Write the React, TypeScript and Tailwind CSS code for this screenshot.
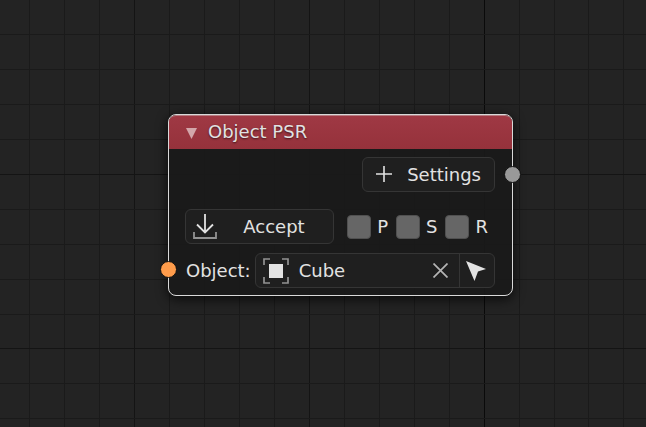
import { useState } from "react";

const columns = Array.from({ length: 80 }, (_, i) => Math.floor(29.92 + i * 34.94));
const rows = Array.from({ length: 60 }, (_, i) => Math.floor(34.5 + i * 34.94));

function Grid() {
  return (
    <svg className="pointer-events-none absolute inset-0 h-full w-full" aria-hidden="true" shapeRendering="crispEdges">
      {columns.map((x, i) => (
        <rect key={x} x={x} y="0" width="1" height="100%" fill={i === 13 ? "#0a0a0a" : i % 5 === 3 ? "#141414" : "#1a1a1a"} />
      ))}
      {rows.map((y, i) => (
        <rect key={y} x="0" y={y} width="100%" height="1" fill={i % 5 === 4 ? "#141414" : "#1a1a1a"} />
      ))}
    </svg>
  );
}

function Toggle({ label }: { label: string }) {
  return (
    <label className="flex items-center gap-1.5">
      <input type="checkbox" className="size-6 appearance-none rounded border border-[#505050] bg-[#666666] checked:bg-[#5680c2]" />
      {label}
    </label>
  );
}

const control = "flex h-[35px] items-center rounded-md border border-[#353535] bg-[#1f1f1f]";

export default function App() {
  const [name, setName] = useState("Cube");
  return (
    <main className="relative min-h-screen overflow-hidden bg-[#232323] font-['DejaVu_Sans',sans-serif] text-lg/6 text-[#e2e2e2]">
      <Grid />
      <section className="absolute top-[114px] left-[168px] w-[345px] rounded-lg border border-[#d9d9d9] bg-[#1a1a1a]/90 shadow-[0_3px_12px_rgba(0,0,0,0.75)]">
        <header className="flex h-[34px] items-center gap-[11px] rounded-t-[7px] border-t border-[#b77c82] bg-linear-to-b from-[#a63a46]/95 to-[#9c333d]/95 pb-0.5 pl-[17px] text-shadow-[0_1px_2px_rgba(0,0,0,0.6)]">
          <button type="button" aria-label="Collapse node" className="pt-0.5">
            <svg width="11" height="12" viewBox="0 0 11 12" className="block" fill="#d3a6aa">
              <path d="M0 1H11L5.500 12Z" />
            </svg>
          </button>
          <h1>Object PSR</h1>
        </header>
        <div className="flex flex-col pt-2 pr-[17px] pb-[7px] pl-4">
          <button type="button" className={`${control} gap-3.5 self-end pr-[13px] pl-3`}>
            <svg width="18" height="18" viewBox="0 0 18 18" className="mb-0.5" stroke="#e2e2e2" strokeWidth="1.6">
              <path d="M9 1V17M1 9H17" />
            </svg>
            Settings
          </button>
          <div className="mt-[17px] flex items-center justify-between">
            <button type="button" className={`${control} w-[149px] pl-[7px]`}>
              <svg width="24" height="26" viewBox="0 0 24 26" fill="none" strokeWidth="1.8">
                <path d="M12 0V18.500M4 10.500L12 18.500L20 10.500" stroke="#e2e2e2" />
                <path d="M1 18V24H23V18" stroke="#929292" />
              </svg>
              <span className="flex-1 pr-0.5 text-center">Accept</span>
            </button>
            <div className="flex gap-2 pr-[7px]">
              <Toggle label="P" />
              <Toggle label="S" />
              <Toggle label="R" />
            </div>
          </div>
          <div className="mt-[9px] flex items-center gap-1 pl-px">
            <label htmlFor="object">Object:</label>
            <div className={`${control} min-w-0 flex-1`}>
              <svg width="26" height="26" viewBox="0 0 26 26" className="ml-[7px] shrink-0" fill="none">
                <path d="M1 7V1H7M19 1H25V7M25 19V25H19M7 25H1V19" stroke="#929292" strokeWidth="1.7" />
                <path d="M6 6H20V20H6Z" fill="#e2e2e2" />
              </svg>
              <input id="object" value={name} onChange={(e) => setName(e.target.value)} className="ml-2.5 min-w-0 flex-1 bg-transparent outline-none" />
              <button type="button" aria-label="Clear object" className="pr-[11px] pl-3" onClick={() => setName("")}>
                <svg width="15" height="15" viewBox="0 0 15 15" className="block" stroke="#b4b4b4" strokeWidth="1.7">
                  <path d="M.5 .5L14.500 14.500M14.500 .5L.5 14.500" />
                </svg>
              </button>
              <button type="button" aria-label="Pick object" className="flex h-full w-[35px] items-center border-l border-[#353535] pl-1.5">
                <svg width="20" height="20" viewBox="0 0 20 20" fill="#e2e2e2">
                  <path d="M0 0L20 8L12 10.500L8.500 20Z" />
                </svg>
              </button>
            </div>
          </div>
        </div>
        <span className="absolute top-[51px] -right-[9px] size-[17px] rounded-full border border-[#111111] bg-[#999999]" />
        <span className="absolute top-[146px] -left-[9px] size-[17px] rounded-full border border-[#111111] bg-[#ff9c4b]" />
      </section>
    </main>
  );
}
